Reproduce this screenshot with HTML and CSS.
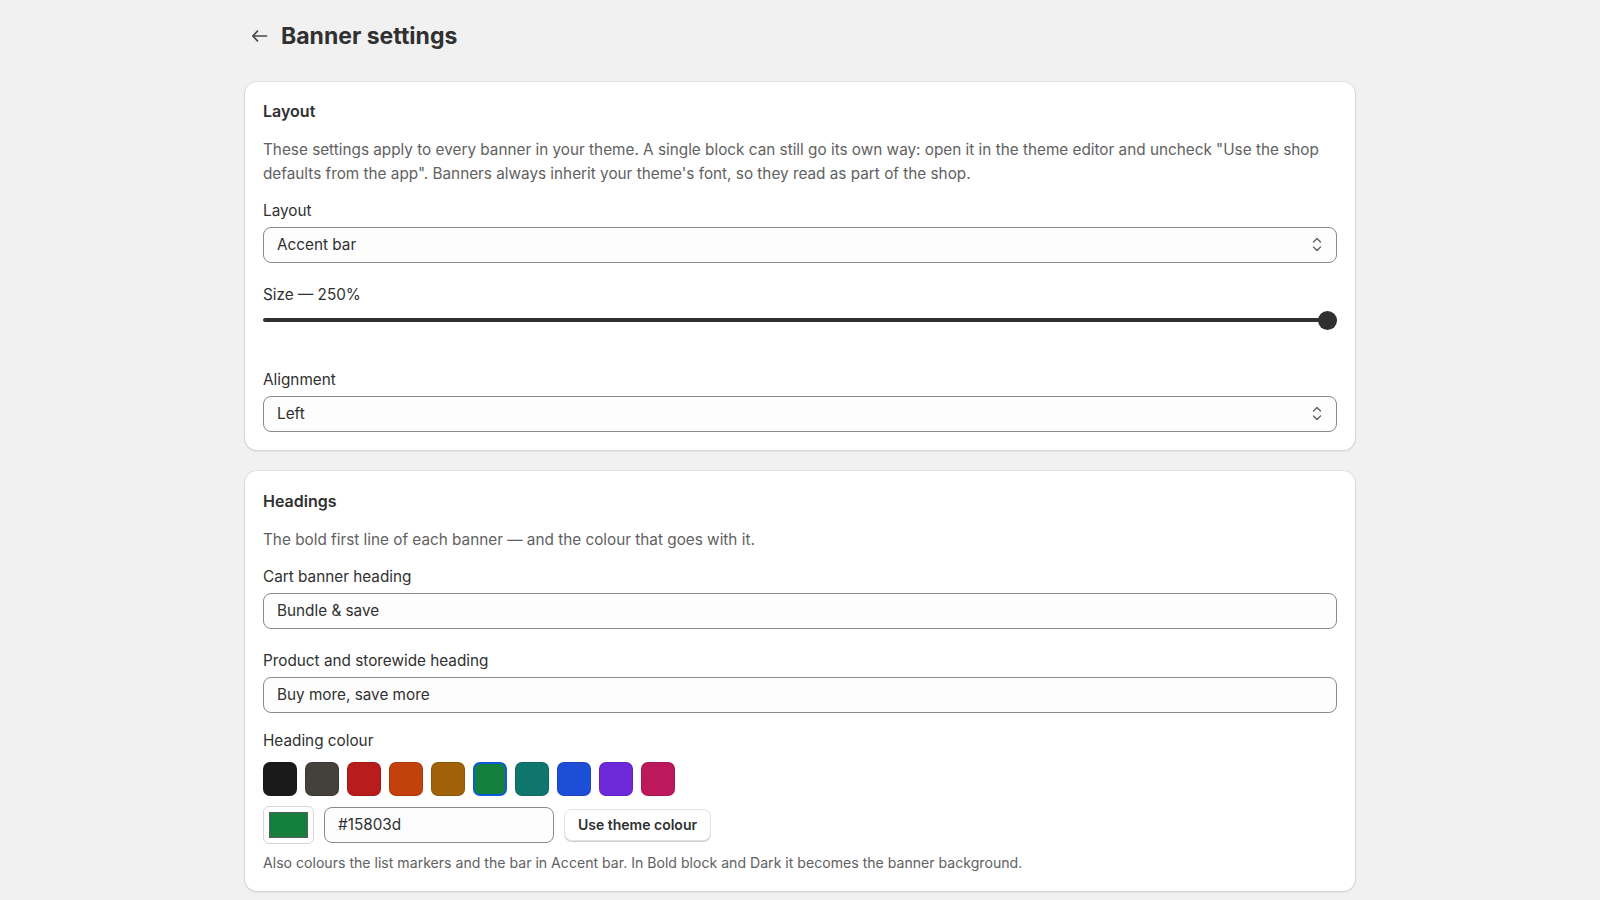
FILE: index.html
```html
<!DOCTYPE html>
<html lang="en">
<head>
    <meta charset="UTF-8">
    <meta name="viewport" content="width=device-width, initial-scale=1.0">
    <title>Banner settings</title>
    <link rel="stylesheet" href="styles.css">
</head>
<body>

    <div class="page">
        <div class="page-header">
            <a class="back-link" href="#" aria-label="Back">
                <svg width="17" height="16" viewBox="0 0 17 16" fill="none">
                    <path d="M15.5 8H1.8M6.5 3.2L1.8 8L6.5 12.8" stroke="#4a4a4a" stroke-width="1.7" stroke-linecap="round" stroke-linejoin="round"/>
                </svg>
            </a>
            <h1>Banner settings</h1>
        </div>

        <div class="card">
            <h2>Layout</h2>
            <p class="card-desc">These settings apply to every banner in your theme. A single block can still go its own way: open it in the theme editor and uncheck "Use the shop defaults from the app". Banners always inherit your theme's font, so they read as part of the shop.</p>

            <div class="field">
                <label>Layout</label>
                <div class="select">
                    <span>Accent bar</span>
                    <svg class="chevrons" width="10" height="15" viewBox="0 0 10 15" fill="none">
                        <path d="M1.5 5L5 1.5L8.5 5M1.5 10L5 13.5L8.5 10" stroke="#616161" stroke-width="1.4" stroke-linecap="round" stroke-linejoin="round"/>
                    </svg>
                </div>
            </div>

            <div class="field field-range">
                <label>Size — 250%</label>
                <input class="range" type="range" min="50" max="250" value="250">
            </div>

            <div class="field">
                <label>Alignment</label>
                <div class="select">
                    <span>Left</span>
                    <svg class="chevrons" width="10" height="15" viewBox="0 0 10 15" fill="none">
                        <path d="M1.5 5L5 1.5L8.5 5M1.5 10L5 13.5L8.5 10" stroke="#616161" stroke-width="1.4" stroke-linecap="round" stroke-linejoin="round"/>
                    </svg>
                </div>
            </div>
        </div>

        <div class="card">
            <h2>Headings</h2>
            <p class="card-desc">The bold first line of each banner — and the colour that goes with it.</p>

            <div class="field">
                <label>Cart banner heading</label>
                <input class="text-input" type="text" value="Bundle &amp; save">
            </div>

            <div class="field">
                <label>Product and storewide heading</label>
                <input class="text-input" type="text" value="Buy more, save more">
            </div>

            <div class="field field-colour">
                <label>Heading colour</label>
                <div class="swatches">
                    <span class="swatch" style="background:#1a1a1a"></span>
                    <span class="swatch" style="background:#44403c"></span>
                    <span class="swatch" style="background:#b91c1c"></span>
                    <span class="swatch" style="background:#c2410c"></span>
                    <span class="swatch" style="background:#a16207"></span>
                    <span class="swatch selected" style="background:#15803d"></span>
                    <span class="swatch" style="background:#0f766e"></span>
                    <span class="swatch" style="background:#1d4ed8"></span>
                    <span class="swatch" style="background:#6d28d9"></span>
                    <span class="swatch" style="background:#be185d"></span>
                </div>
                <div class="colour-row">
                    <div class="colour-well"><span style="background:#15803d"></span></div>
                    <input class="text-input hex-input" type="text" value="#15803d">
                    <button class="btn">Use theme colour</button>
                </div>
                <p class="hint">Also colours the list markers and the bar in Accent bar. In Bold block and Dark it becomes the banner background.</p>
            </div>
        </div>
    </div>

</body>
</html>
```

FILE: styles.css
```css
body {
    margin: 0;
    padding: 0;
    background-color: #f1f1f1;
    font-family: Inter, "Noto Sans", sans-serif;
    font-size: 15.3px;
    color: #303030;
}
.page {
    width: 1110px;
    margin: 0 auto;
    padding: 22px 0 40px;
}
.page-header {
    display: flex;
    align-items: center;
    gap: 13px;
    padding-left: 6px;
    height: 28px;
    margin-bottom: 32px;
}
.back-link {
    display: flex;
    align-items: center;
}
.page-header h1 {
    margin: 0;
    font-size: 23px;
    line-height: 28px;
    font-weight: 700;
    color: #303030;
}
.card {
    background-color: #fff;
    border-radius: 12px;
    padding: 18px;
    margin-bottom: 21px;
    box-shadow: 0 0 0 1px rgba(0, 0, 0, 0.06), 0 1px 0 1px rgba(0, 0, 0, 0.05);
}
.card h2 {
    margin: 0;
    font-size: 16px;
    line-height: 22px;
    font-weight: 600;
    color: #303030;
}
.card + .card h2 {
    margin-top: 1px;
}
.card-desc {
    margin: 16px 0 0;
    line-height: 23.5px;
    color: #616161;
}
.field {
    margin-top: 22px;
}
.card-desc + .field {
    margin-top: 15.5px;
}
.field label {
    display: block;
    line-height: 20px;
    margin-bottom: 6px;
    color: #303030;
}
.select,
.text-input {
    box-sizing: border-box;
    width: 100%;
    height: 36px;
    border: 1px solid #8a8a8a;
    border-radius: 8px;
    background-color: #fdfdfd;
    padding: 0 14px 0 13px;
    font-family: inherit;
    font-size: 15.3px;
    color: #303030;
}
.select {
    display: flex;
    align-items: center;
    justify-content: space-between;
}
.text-input {
    outline: none;
}
.range {
    -webkit-appearance: none;
    appearance: none;
    display: block;
    width: 100%;
    height: 19px;
    margin: 0 0 40px;
    background: transparent;
}
.range::-webkit-slider-runnable-track {
    height: 4px;
    border-radius: 2px;
    background-color: #303030;
}
.range::-webkit-slider-thumb {
    -webkit-appearance: none;
    width: 19px;
    height: 19px;
    margin-top: -7.5px;
    border-radius: 50%;
    background-color: #303030;
    border: none;
}
.field-range + .field {
    margin-top: 0;
}
.field-colour {
    margin-top: 18px;
}
.field-colour label {
    margin-bottom: 11px;
}
.swatches {
    display: flex;
    gap: 8px;
}
.swatch {
    box-sizing: border-box;
    width: 34px;
    height: 34px;
    border-radius: 7px;
    border: 1px solid rgba(0, 0, 0, 0.12);
}
.swatch.selected {
    border: 2px solid #0b5bd6;
}
.colour-row {
    display: flex;
    align-items: center;
    gap: 10px;
    margin-top: 10px;
}
.colour-well {
    box-sizing: border-box;
    width: 51px;
    height: 38px;
    padding: 5px;
    border: 1px solid #d6d6d6;
    border-radius: 6px;
    background-color: #fff;
}
.colour-well span {
    display: block;
    box-sizing: border-box;
    width: 100%;
    height: 100%;
    border: 1px solid #5c5c5c;
}
.hex-input {
    width: 230px;
}
.btn {
    height: 32px;
    padding: 0 13px;
    border: 1px solid #e3e3e3;
    border-radius: 8px;
    background-color: #fff;
    box-shadow: 0 1px 0 #cfcfcf;
    font-family: inherit;
    font-size: 14px;
    font-weight: 600;
    color: #303030;
}
.hint {
    margin: 9px 0 0;
    font-size: 14.1px;
    line-height: 20px;
    color: #616161;
}
```
